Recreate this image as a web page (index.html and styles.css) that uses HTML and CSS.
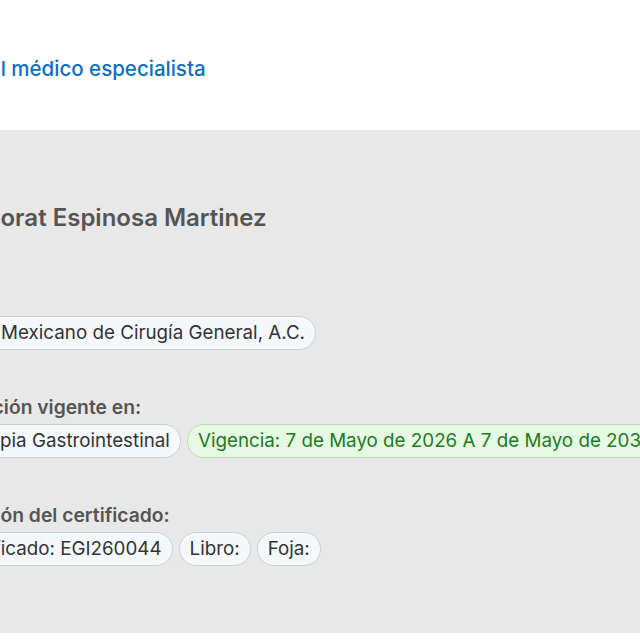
FILE: index.html
```html
<!DOCTYPE html>
<html lang="es">

<head>
    <meta charset="UTF-8">
    <meta name="viewport" content="width=device-width, initial-scale=1.0">
    <title>Perfil del médico especialista</title>
    <link rel="stylesheet" href="styles.css">
</head>

<body>

    <header class="top-bar">
        <div class="inner">
            <h1 class="page-title">Perfil del médico especialista</h1>
        </div>
    </header>

    <section class="profile">
        <div class="inner">
            <h2 class="doctor-name">Dra. Liborat Espinosa Martinez</h2>

            <div class="group">
                <div class="label">Consejo:</div>
                <div class="chips">
                    <span class="chip">Consejo Mexicano de Cirugía General, A.C.</span>
                </div>
            </div>

            <div class="group">
                <div class="label">Certificación vigente en:</div>
                <div class="chips">
                    <span class="chip">Endoscopia Gastrointestinal</span>
                    <span class="chip chip-valid">Vigencia: 7 de Mayo de 2026 A 7 de Mayo de 2031</span>
                </div>
            </div>

            <div class="group">
                <div class="label">Información del certificado:</div>
                <div class="chips">
                    <span class="chip">N° Certificado: EGI260044</span>
                    <span class="chip">Libro:</span>
                    <span class="chip">Foja:</span>
                </div>
            </div>
        </div>
    </section>

</body>

</html>
```

FILE: styles.css
```css
body {
    font-family: Inter, 'Open Sans', sans-serif;
    margin: 0;
    background-color: #ffffff;
    overflow: hidden;
}

.inner {
    margin-left: -88px;
}

.top-bar {
    height: 130px;
    background-color: #ffffff;
    padding-top: 54px;
    box-sizing: border-box;
}

.page-title {
    margin: 0;
    padding-left: 7px;
    font-size: 20.5px;
    line-height: 30px;
    font-weight: 500;
    color: #0d6fbf;
    white-space: nowrap;
}

.profile {
    height: 503px;
    background-color: #e8e8e8;
    padding-top: 73px;
    box-sizing: border-box;
}

.doctor-name {
    margin: 0 0 54px 0;
    font-size: 24px;
    line-height: 30px;
    font-weight: 600;
    color: #555555;
    white-space: nowrap;
}

.group {
    margin-bottom: 45px;
}

.label {
    font-size: 19.3px;
    line-height: 24px;
    font-weight: 600;
    color: #555555;
    margin-bottom: 5px;
    white-space: nowrap;
}

.chips {
    display: flex;
    gap: 6px;
    white-space: nowrap;
}

.chip {
    display: inline-block;
    height: 34px;
    line-height: 32px;
    padding: 0 10px;
    box-sizing: border-box;
    font-size: 18.8px;
    color: #333333;
    background-color: #f4f8fb;
    border: 1px solid #c9d1d8;
    border-radius: 17px;
    flex-shrink: 0;
}

.chip-valid {
    background-color: #e6f9e3;
    border-color: #bcdcb8;
    color: #1f7a1f;
}
```
